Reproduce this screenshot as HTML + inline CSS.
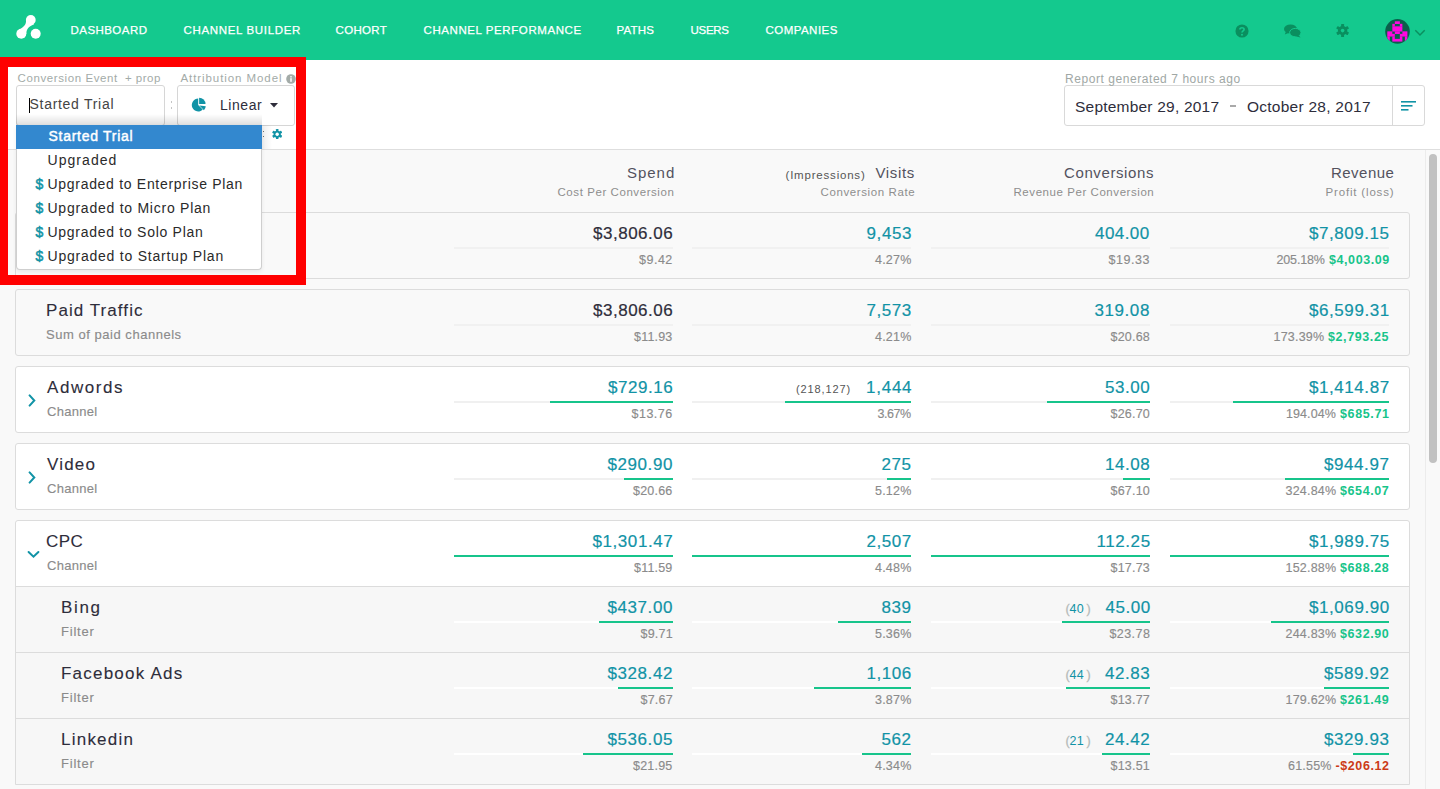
<!DOCTYPE html><html><head><meta charset="utf-8"><style>
*{margin:0;padding:0;box-sizing:border-box}
html,body{width:1440px;height:789px;overflow:hidden;background:#fff;font-family:"Liberation Sans", sans-serif}
.a{position:absolute}
.t{position:absolute;white-space:nowrap;line-height:30px}
.track{position:absolute;height:2px}
.bar{position:absolute;height:2px;background:#17c48b}
.row{position:absolute;left:15px;width:1395px;border:1px solid #dcdcdc;border-radius:3px}
</style></head><body><div class="a" style="left:0;top:0;width:1440px;height:60px;background:#14c98e"></div><svg class="a" style="left:14px;top:12px" width="32" height="32" viewBox="14 12 32 32"><path d="M26.1 20.5 C26.1 25 23.5 27 19.2 29.6 L26.4 34 C26.4 30 27.8 26.8 34.2 24.3 Z" fill="#fff"/><circle cx="30.8" cy="19.9" r="4.9" fill="#fff"/><circle cx="21.3" cy="33.7" r="5" fill="#fff"/><circle cx="35.7" cy="33.7" r="5" fill="#fff"/></svg><svg class="a" style="left:1234.5px;top:23.5px" width="14" height="14" viewBox="0 0 16 16"><circle cx="8" cy="8" r="7.5" fill="#0a8f5f"/><path d="M5.6 6.2 C5.6 3.6 10.4 3.6 10.4 6.2 C10.4 7.8 8 8 8 9.8" stroke="#14c98e" stroke-width="1.9" fill="none"/><circle cx="8" cy="12.2" r="1.1" fill="#14c98e"/></svg><svg class="a" style="left:1284px;top:24px" width="17" height="14" viewBox="0 0 17 14"><ellipse cx="6.5" cy="5" rx="6.5" ry="4.6" fill="#0a8f5f"/><path d="M2 7.5 L0.8 10.5 L5 8.8Z" fill="#0a8f5f"/><ellipse cx="11.3" cy="8.6" rx="5.7" ry="4.2" fill="#0a8f5f" stroke="#14c98e" stroke-width="1"/><path d="M14.5 11 L16.5 13.6 L11.5 12.3Z" fill="#0a8f5f"/></svg><svg class="a" style="left:1335.90px;top:23.90px" width="13.20" height="13.20" viewBox="-8 -8 16 16"><g fill="#0a8f5f"><circle cx="0" cy="0" r="5.6"/><rect x="-1.8" y="-8" width="3.6" height="5" rx="0.7" transform="rotate(0)"/><rect x="-1.8" y="-8" width="3.6" height="5" rx="0.7" transform="rotate(60)"/><rect x="-1.8" y="-8" width="3.6" height="5" rx="0.7" transform="rotate(120)"/><rect x="-1.8" y="-8" width="3.6" height="5" rx="0.7" transform="rotate(180)"/><rect x="-1.8" y="-8" width="3.6" height="5" rx="0.7" transform="rotate(240)"/><rect x="-1.8" y="-8" width="3.6" height="5" rx="0.7" transform="rotate(300)"/></g><circle cx="0" cy="0" r="2.2" fill="#14c98e"/></svg><svg class="a" style="left:1385px;top:19px" width="25" height="25" viewBox="0 0 25 25"><defs><clipPath id="cc"><circle cx="12.5" cy="12.4" r="12.3"/></clipPath></defs><circle cx="12.5" cy="12.4" r="12.3" fill="#0b5e4c"/><g clip-path="url(#cc)"><g transform="translate(2.3 2.3) scale(2.51)" fill="#ff08e0"><rect x="3" y="0" width="2" height="1.08"/><rect x="2" y="1" width="1" height="1.08"/><rect x="5" y="1" width="1" height="1.08"/><rect x="2" y="2" width="4" height="1.08"/><rect x="2" y="3" width="4" height="1.08"/><rect x="0" y="4" width="2" height="1.08"/><rect x="3" y="4" width="2" height="1.08"/><rect x="6" y="4" width="2" height="1.08"/><rect x="0" y="5" width="3" height="1.08"/><rect x="5" y="5" width="3" height="1.08"/><rect x="0" y="6" width="1" height="1.08"/><rect x="2" y="6" width="1" height="1.08"/><rect x="5" y="6" width="1" height="1.08"/><rect x="7" y="6" width="1" height="1.08"/><rect x="0" y="7" width="1" height="1.08"/><rect x="2" y="7" width="4" height="1.08"/><rect x="7" y="7" width="1" height="1.08"/></g></g></svg><svg class="a" style="left:1414px;top:29px" width="12" height="8" viewBox="0 0 12 8"><path d="M1.3 1.3 L6 6 L10.7 1.3" stroke="#0a8f5f" stroke-width="1.5" fill="none"/></svg><div class="a" style="left:1064px;top:85px;width:361px;height:41px;border:1px solid #d9d9d9;border-radius:3px"></div><div class="a" style="left:1392px;top:86px;width:1px;height:39px;background:#d9d9d9"></div><div class="a" style="left:1230px;top:105px;width:6px;height:2px;background:#a9a9a9"></div><svg class="a" style="left:1401px;top:101px" width="15" height="10" viewBox="0 0 15 10"><g fill="#1193a6"><rect x="0" y="0" width="15" height="1.6"/><rect x="0" y="4" width="11.5" height="1.6"/><rect x="0" y="8" width="7.5" height="1.6"/></g></svg><div class="a" style="left:0;top:149px;width:1440px;height:640px;background:#f9f9f9;border-top:1px solid #dedede"></div><div class="a" style="left:1425px;top:150px;width:1px;height:639px;background:#ececec"></div><div class="a" style="left:1429px;top:154px;width:8px;height:309px;background:#c1c1c1;border-radius:4px"></div><div class="row" style="top:212px;height:67px;background:#f9f9f9"></div><div class="row" style="top:289px;height:67px;background:#f9f9f9"></div><div class="row" style="top:366px;height:67px;background:#fff"></div><div class="row" style="top:443px;height:67px;background:#fff"></div><div class="track" style="left:454.00px;top:247px;width:219px;background:#f1f1f1"></div><div class="track" style="left:692.00px;top:247px;width:219px;background:#f1f1f1"></div><div class="track" style="left:931.00px;top:247px;width:219px;background:#f1f1f1"></div><div class="track" style="left:1170.00px;top:247px;width:219px;background:#f1f1f1"></div><div class="track" style="left:454.00px;top:324px;width:219px;background:#f1f1f1"></div><div class="track" style="left:692.00px;top:324px;width:219px;background:#f1f1f1"></div><div class="track" style="left:931.00px;top:324px;width:219px;background:#f1f1f1"></div><div class="track" style="left:1170.00px;top:324px;width:219px;background:#f1f1f1"></div><div class="track" style="left:454.00px;top:401px;width:219px;background:#f0f0f0"></div><div class="bar" style="left:550.30px;top:401px;width:122.70px"></div><div class="track" style="left:692.00px;top:401px;width:219px;background:#f0f0f0"></div><div class="bar" style="left:784.86px;top:401px;width:126.14px"></div><div class="track" style="left:931.00px;top:401px;width:219px;background:#f0f0f0"></div><div class="bar" style="left:1046.60px;top:401px;width:103.40px"></div><div class="track" style="left:1170.00px;top:401px;width:219px;background:#f0f0f0"></div><div class="bar" style="left:1233.27px;top:401px;width:155.73px"></div><svg class="a" style="left:27px;top:394px" width="10" height="13" viewBox="0 0 10 13"><path d="M2.6 1.4 L7.3 6.5 L2.6 11.6" stroke="#1193a6" stroke-width="2" fill="none" stroke-linecap="round"/></svg><div class="track" style="left:454.00px;top:478px;width:219px;background:#f0f0f0"></div><div class="bar" style="left:624.05px;top:478px;width:48.95px"></div><div class="track" style="left:692.00px;top:478px;width:219px;background:#f0f0f0"></div><div class="bar" style="left:886.98px;top:478px;width:24.02px"></div><div class="track" style="left:931.00px;top:478px;width:219px;background:#f0f0f0"></div><div class="bar" style="left:1122.53px;top:478px;width:27.47px"></div><div class="track" style="left:1170.00px;top:478px;width:219px;background:#f0f0f0"></div><div class="bar" style="left:1284.99px;top:478px;width:104.01px"></div><svg class="a" style="left:27px;top:471px" width="10" height="13" viewBox="0 0 10 13"><path d="M2.6 1.4 L7.3 6.5 L2.6 11.6" stroke="#1193a6" stroke-width="2" fill="none" stroke-linecap="round"/></svg><div class="row" style="top:520px;height:265px;background:#f7f7f7;border-radius:3px 3px 0 0"></div><div class="a" style="left:16px;top:521px;width:1393px;height:65px;background:#fff;border-radius:3px 3px 0 0"></div><div class="a" style="left:16px;top:586px;width:1393px;height:1px;background:#dcdcdc"></div><div class="a" style="left:16px;top:652px;width:1393px;height:1px;background:#dcdcdc"></div><div class="a" style="left:16px;top:718px;width:1393px;height:1px;background:#dcdcdc"></div><svg class="a" style="left:27px;top:550px" width="13" height="10" viewBox="0 0 13 10"><path d="M1.6 2 L6.5 6.7 L11.4 2" stroke="#1193a6" stroke-width="2" fill="none" stroke-linecap="round"/></svg><div class="track" style="left:454.00px;top:555px;width:219px;background:#f0f0f0"></div><div class="bar" style="left:454.00px;top:555px;width:219.00px"></div><div class="track" style="left:692.00px;top:555px;width:219px;background:#f0f0f0"></div><div class="bar" style="left:692.00px;top:555px;width:219.00px"></div><div class="track" style="left:931.00px;top:555px;width:219px;background:#f0f0f0"></div><div class="bar" style="left:931.00px;top:555px;width:219.00px"></div><div class="track" style="left:1170.00px;top:555px;width:219px;background:#f0f0f0"></div><div class="bar" style="left:1170.00px;top:555px;width:219.00px"></div><div class="track" style="left:454.00px;top:621px;width:219px;background:#fff"></div><div class="bar" style="left:599.47px;top:621px;width:73.53px"></div><div class="track" style="left:692.00px;top:621px;width:219px;background:#fff"></div><div class="bar" style="left:837.71px;top:621px;width:73.29px"></div><div class="track" style="left:931.00px;top:621px;width:219px;background:#fff"></div><div class="bar" style="left:1062.20px;top:621px;width:87.80px"></div><div class="track" style="left:1170.00px;top:621px;width:219px;background:#fff"></div><div class="bar" style="left:1271.24px;top:621px;width:117.76px"></div><div class="track" style="left:454.00px;top:687px;width:219px;background:#fff"></div><div class="bar" style="left:617.74px;top:687px;width:55.26px"></div><div class="track" style="left:692.00px;top:687px;width:219px;background:#fff"></div><div class="bar" style="left:814.38px;top:687px;width:96.62px"></div><div class="track" style="left:931.00px;top:687px;width:219px;background:#fff"></div><div class="bar" style="left:1066.44px;top:687px;width:83.56px"></div><div class="track" style="left:1170.00px;top:687px;width:219px;background:#fff"></div><div class="bar" style="left:1324.07px;top:687px;width:64.93px"></div><div class="track" style="left:454.00px;top:753px;width:219px;background:#fff"></div><div class="bar" style="left:582.80px;top:753px;width:90.20px"></div><div class="track" style="left:692.00px;top:753px;width:219px;background:#fff"></div><div class="bar" style="left:861.91px;top:753px;width:49.09px"></div><div class="track" style="left:931.00px;top:753px;width:219px;background:#fff"></div><div class="bar" style="left:1102.36px;top:753px;width:47.64px"></div><div class="track" style="left:1170.00px;top:753px;width:219px;background:#fff"></div><div class="bar" style="left:1352.69px;top:753px;width:36.31px"></div><div class="t" style="left:70.5px;top:15px;font-size:11.5px;color:#fff;-webkit-text-stroke-width:0.25px;letter-spacing:0.45px">DASHBOARD</div><div class="t" style="left:183.5px;top:15px;font-size:11.5px;color:#fff;-webkit-text-stroke-width:0.25px;letter-spacing:0.66px">CHANNEL BUILDER</div><div class="t" style="left:335.5px;top:15px;font-size:11.5px;color:#fff;-webkit-text-stroke-width:0.25px;letter-spacing:0.34px">COHORT</div><div class="t" style="left:423.5px;top:15px;font-size:11.5px;color:#fff;-webkit-text-stroke-width:0.25px;letter-spacing:0.58px">CHANNEL PERFORMANCE</div><div class="t" style="left:616.5px;top:15px;font-size:11.5px;color:#fff;-webkit-text-stroke-width:0.25px;letter-spacing:0.18px">PATHS</div><div class="t" style="left:690.5px;top:15px;font-size:11.5px;color:#fff;-webkit-text-stroke-width:0.25px;letter-spacing:-0.28px">USERS</div><div class="t" style="left:765.5px;top:15px;font-size:11.5px;color:#fff;-webkit-text-stroke-width:0.25px;letter-spacing:0.46px">COMPANIES</div><div class="t" style="left:1065px;top:64px;font-size:12px;color:#a0a8a5;letter-spacing:0.56px">Report generated 7 hours ago</div><div class="t" style="left:1075px;top:92px;font-size:15.5px;color:#2e2d3b;letter-spacing:0.21px">September 29, 2017</div><div class="t" style="left:1247px;top:92px;font-size:15.5px;color:#2e2d3b;letter-spacing:0.25px">October 28, 2017</div><div class="t" style="left:627px;top:158px;font-size:15px;color:#53525e;letter-spacing:0.97px">Spend</div><div class="t" style="left:557.5px;top:177px;font-size:11.5px;color:#8e8e8e;letter-spacing:0.57px">Cost Per Conversion</div><div class="t" style="left:875.5px;top:158px;font-size:15px;color:#53525e;letter-spacing:0.64px">Visits</div><div class="t" style="left:820.5px;top:177px;font-size:11.5px;color:#8e8e8e;letter-spacing:0.61px">Conversion Rate</div><div class="t" style="left:1064px;top:158px;font-size:15px;color:#53525e;letter-spacing:0.61px">Conversions</div><div class="t" style="left:1013.5px;top:177px;font-size:11.5px;color:#8e8e8e;letter-spacing:0.56px">Revenue Per Conversion</div><div class="t" style="left:1331px;top:158px;font-size:15px;color:#53525e;letter-spacing:0.47px">Revenue</div><div class="t" style="left:1325.5px;top:177px;font-size:11.5px;color:#8e8e8e;letter-spacing:0.83px">Profit (loss)</div><div class="t" style="left:785.5px;top:160px;font-size:11.5px;color:#555;letter-spacing:0.80px">(Impressions)</div><div class="t" style="left:593px;top:219px;font-size:17px;-webkit-text-stroke-width:0.2px;color:#2e2d3b;letter-spacing:0.51px">$3,806.06</div><div class="t" style="left:639px;top:245px;font-size:12.5px;-webkit-text-stroke-width:0.15px;color:#8b8b8b;letter-spacing:0.50px">$9.42</div><div class="t" style="left:866.5px;top:219px;font-size:17px;-webkit-text-stroke-width:0.2px;color:#1193a6;letter-spacing:0.62px">9,453</div><div class="t" style="left:875px;top:245px;font-size:12.5px;-webkit-text-stroke-width:0.15px;color:#8b8b8b;letter-spacing:0.20px">4.27%</div><div class="t" style="left:1095px;top:219px;font-size:17px;-webkit-text-stroke-width:0.2px;color:#1193a6;letter-spacing:0.44px">404.00</div><div class="t" style="left:1108.5px;top:245px;font-size:12.5px;-webkit-text-stroke-width:0.15px;color:#8b8b8b;letter-spacing:0.54px">$19.33</div><div class="t" style="left:1309px;top:219px;font-size:17px;-webkit-text-stroke-width:0.2px;color:#1193a6;letter-spacing:0.53px">$7,809.15</div><div class="t" style="left:1329px;top:245px;font-size:12.5px;color:#17c48a;font-weight:bold;letter-spacing:0.58px">$4,003.09</div><div class="t" style="left:1276.5px;top:245px;font-size:12.5px;-webkit-text-stroke-width:0.15px;color:#8b8b8b;letter-spacing:-0.15px">205.18%</div><div class="t" style="left:46px;top:296px;font-size:17px;-webkit-text-stroke-width:0.1px;color:#2e2d3b;letter-spacing:1.07px">Paid Traffic</div><div class="t" style="left:46px;top:320px;font-size:13px;-webkit-text-stroke-width:0.15px;color:#8b8b8b;letter-spacing:0.53px">Sum of paid channels</div><div class="t" style="left:593px;top:296px;font-size:17px;-webkit-text-stroke-width:0.2px;color:#2e2d3b;letter-spacing:0.51px">$3,806.06</div><div class="t" style="left:634px;top:322px;font-size:12.5px;-webkit-text-stroke-width:0.15px;color:#8b8b8b;letter-spacing:0.20px">$11.93</div><div class="t" style="left:866.5px;top:296px;font-size:17px;-webkit-text-stroke-width:0.2px;color:#1193a6;letter-spacing:0.57px">7,573</div><div class="t" style="left:875px;top:322px;font-size:12.5px;-webkit-text-stroke-width:0.15px;color:#8b8b8b;letter-spacing:0.20px">4.21%</div><div class="t" style="left:1094.5px;top:296px;font-size:17px;-webkit-text-stroke-width:0.2px;color:#1193a6;letter-spacing:0.57px">319.08</div><div class="t" style="left:1110.5px;top:322px;font-size:12.5px;-webkit-text-stroke-width:0.15px;color:#8b8b8b;letter-spacing:0.20px">$20.68</div><div class="t" style="left:1309px;top:296px;font-size:17px;-webkit-text-stroke-width:0.2px;color:#1193a6;letter-spacing:0.57px">$6,599.31</div><div class="t" style="left:1328px;top:322px;font-size:12.5px;color:#17c48a;font-weight:bold;letter-spacing:0.60px">$2,793.25</div><div class="t" style="left:1273.5px;top:322px;font-size:12.5px;-webkit-text-stroke-width:0.15px;color:#8b8b8b;letter-spacing:0.20px">173.39%</div><div class="t" style="left:47px;top:373px;font-size:17px;-webkit-text-stroke-width:0.1px;color:#2e2d3b;letter-spacing:1.55px">Adwords</div><div class="t" style="left:47px;top:397px;font-size:13px;-webkit-text-stroke-width:0.15px;color:#8b8b8b;letter-spacing:0.28px">Channel</div><div class="t" style="left:608px;top:373px;font-size:17px;-webkit-text-stroke-width:0.2px;color:#1193a6;letter-spacing:0.53px">$729.16</div><div class="t" style="left:631.5px;top:399px;font-size:12.5px;-webkit-text-stroke-width:0.15px;color:#8b8b8b;letter-spacing:0.50px">$13.76</div><div class="t" style="left:866px;top:373px;font-size:17px;-webkit-text-stroke-width:0.2px;color:#1193a6;letter-spacing:0.75px">1,444</div><div class="t" style="left:877.5px;top:399px;font-size:12.5px;-webkit-text-stroke-width:0.15px;color:#8b8b8b;letter-spacing:-0.47px">3.67%</div><div class="t" style="left:1105px;top:373px;font-size:17px;-webkit-text-stroke-width:0.2px;color:#1193a6;letter-spacing:0.57px">53.00</div><div class="t" style="left:1110.5px;top:399px;font-size:12.5px;-webkit-text-stroke-width:0.15px;color:#8b8b8b;letter-spacing:0.20px">$26.70</div><div class="t" style="left:1309px;top:373px;font-size:17px;-webkit-text-stroke-width:0.2px;color:#1193a6;letter-spacing:0.56px">$1,414.87</div><div class="t" style="left:1340px;top:399px;font-size:12.5px;color:#17c48a;font-weight:bold;letter-spacing:0.62px">$685.71</div><div class="t" style="left:1286px;top:399px;font-size:12.5px;-webkit-text-stroke-width:0.15px;color:#8b8b8b;letter-spacing:0.08px">194.04%</div><div class="t" style="left:796px;top:374px;font-size:11px;color:#555;letter-spacing:0.88px">(218,127)</div><div class="t" style="left:47px;top:450px;font-size:17px;-webkit-text-stroke-width:0.1px;color:#2e2d3b;letter-spacing:1.20px">Video</div><div class="t" style="left:47px;top:474px;font-size:13px;-webkit-text-stroke-width:0.15px;color:#8b8b8b;letter-spacing:0.28px">Channel</div><div class="t" style="left:607.5px;top:450px;font-size:17px;-webkit-text-stroke-width:0.2px;color:#1193a6;letter-spacing:0.57px">$290.90</div><div class="t" style="left:633px;top:476px;font-size:12.5px;-webkit-text-stroke-width:0.15px;color:#8b8b8b;letter-spacing:0.20px">$20.66</div><div class="t" style="left:881.5px;top:450px;font-size:17px;-webkit-text-stroke-width:0.2px;color:#1193a6;letter-spacing:0.57px">275</div><div class="t" style="left:875px;top:476px;font-size:12.5px;-webkit-text-stroke-width:0.15px;color:#8b8b8b;letter-spacing:0.20px">5.12%</div><div class="t" style="left:1105px;top:450px;font-size:17px;-webkit-text-stroke-width:0.2px;color:#1193a6;letter-spacing:0.57px">14.08</div><div class="t" style="left:1110.5px;top:476px;font-size:12.5px;-webkit-text-stroke-width:0.15px;color:#8b8b8b;letter-spacing:0.20px">$67.10</div><div class="t" style="left:1324px;top:450px;font-size:17px;-webkit-text-stroke-width:0.2px;color:#1193a6;letter-spacing:0.57px">$944.97</div><div class="t" style="left:1340px;top:476px;font-size:12.5px;color:#17c48a;font-weight:bold;letter-spacing:0.60px">$654.07</div><div class="t" style="left:1285.5px;top:476px;font-size:12.5px;-webkit-text-stroke-width:0.15px;color:#8b8b8b;letter-spacing:0.20px">324.84%</div><div class="t" style="left:46px;top:527px;font-size:17px;-webkit-text-stroke-width:0.1px;color:#2e2d3b;letter-spacing:0.50px">CPC</div><div class="t" style="left:47px;top:551px;font-size:13px;-webkit-text-stroke-width:0.15px;color:#8b8b8b;letter-spacing:0.28px">Channel</div><div class="t" style="left:592.5px;top:527px;font-size:17px;-webkit-text-stroke-width:0.2px;color:#1193a6;letter-spacing:0.57px">$1,301.47</div><div class="t" style="left:634px;top:553px;font-size:12.5px;-webkit-text-stroke-width:0.15px;color:#8b8b8b;letter-spacing:0.20px">$11.59</div><div class="t" style="left:866.5px;top:527px;font-size:17px;-webkit-text-stroke-width:0.2px;color:#1193a6;letter-spacing:0.57px">2,507</div><div class="t" style="left:875px;top:553px;font-size:12.5px;-webkit-text-stroke-width:0.15px;color:#8b8b8b;letter-spacing:0.20px">4.48%</div><div class="t" style="left:1096.5px;top:527px;font-size:17px;-webkit-text-stroke-width:0.2px;color:#1193a6;letter-spacing:0.57px">112.25</div><div class="t" style="left:1110.5px;top:553px;font-size:12.5px;-webkit-text-stroke-width:0.15px;color:#8b8b8b;letter-spacing:0.20px">$17.73</div><div class="t" style="left:1309px;top:527px;font-size:17px;-webkit-text-stroke-width:0.2px;color:#1193a6;letter-spacing:0.57px">$1,989.75</div><div class="t" style="left:1340px;top:553px;font-size:12.5px;color:#17c48a;font-weight:bold;letter-spacing:0.60px">$688.28</div><div class="t" style="left:1285.5px;top:553px;font-size:12.5px;-webkit-text-stroke-width:0.15px;color:#8b8b8b;letter-spacing:0.20px">152.88%</div><div class="t" style="left:61px;top:593px;font-size:17px;-webkit-text-stroke-width:0.1px;color:#2e2d3b;letter-spacing:1.63px">Bing</div><div class="t" style="left:61px;top:617px;font-size:13px;-webkit-text-stroke-width:0.15px;color:#8b8b8b;letter-spacing:0.78px">Filter</div><div class="t" style="left:607.5px;top:593px;font-size:17px;-webkit-text-stroke-width:0.2px;color:#1193a6;letter-spacing:0.57px">$437.00</div><div class="t" style="left:640.5px;top:619px;font-size:12.5px;-webkit-text-stroke-width:0.15px;color:#8b8b8b;letter-spacing:0.20px">$9.71</div><div class="t" style="left:881.5px;top:593px;font-size:17px;-webkit-text-stroke-width:0.2px;color:#1193a6;letter-spacing:0.57px">839</div><div class="t" style="left:875px;top:619px;font-size:12.5px;-webkit-text-stroke-width:0.15px;color:#8b8b8b;letter-spacing:0.20px">5.36%</div><div class="t" style="left:1105.5px;top:593px;font-size:17px;-webkit-text-stroke-width:0.2px;color:#1193a6;letter-spacing:0.53px">45.00</div><div class="t" style="left:1109.5px;top:619px;font-size:12.5px;-webkit-text-stroke-width:0.15px;color:#8b8b8b;letter-spacing:0.42px">$23.78</div><div class="t" style="left:1309px;top:593px;font-size:17px;-webkit-text-stroke-width:0.2px;color:#1193a6;letter-spacing:0.57px">$1,069.90</div><div class="t" style="left:1340px;top:619px;font-size:12.5px;color:#17c48a;font-weight:bold;letter-spacing:0.60px">$632.90</div><div class="t" style="left:1285.5px;top:619px;font-size:12.5px;-webkit-text-stroke-width:0.15px;color:#8b8b8b;letter-spacing:0.20px">244.83%</div><div class="t" style="left:1065.5px;top:594px;font-size:12.5px;color:#b4bab7;-webkit-text-stroke-width:0.3px;letter-spacing:0.00px">(</div><div class="t" style="left:1069.5px;top:594px;font-size:12.5px;color:#1193a6;letter-spacing:0.20px">40</div><div class="t" style="left:1086.5px;top:594px;font-size:12.5px;color:#b4bab7;-webkit-text-stroke-width:0.3px;letter-spacing:0.00px">)</div><div class="t" style="left:61px;top:659px;font-size:17px;-webkit-text-stroke-width:0.1px;color:#2e2d3b;letter-spacing:1.22px">Facebook Ads</div><div class="t" style="left:61px;top:683px;font-size:13px;-webkit-text-stroke-width:0.15px;color:#8b8b8b;letter-spacing:0.78px">Filter</div><div class="t" style="left:607.5px;top:659px;font-size:17px;-webkit-text-stroke-width:0.2px;color:#1193a6;letter-spacing:0.57px">$328.42</div><div class="t" style="left:640.5px;top:685px;font-size:12.5px;-webkit-text-stroke-width:0.15px;color:#8b8b8b;letter-spacing:0.20px">$7.67</div><div class="t" style="left:866.5px;top:659px;font-size:17px;-webkit-text-stroke-width:0.2px;color:#1193a6;letter-spacing:0.57px">1,106</div><div class="t" style="left:875px;top:685px;font-size:12.5px;-webkit-text-stroke-width:0.15px;color:#8b8b8b;letter-spacing:0.20px">3.87%</div><div class="t" style="left:1105px;top:659px;font-size:17px;-webkit-text-stroke-width:0.2px;color:#1193a6;letter-spacing:0.57px">42.83</div><div class="t" style="left:1110.5px;top:685px;font-size:12.5px;-webkit-text-stroke-width:0.15px;color:#8b8b8b;letter-spacing:0.20px">$13.77</div><div class="t" style="left:1324px;top:659px;font-size:17px;-webkit-text-stroke-width:0.2px;color:#1193a6;letter-spacing:0.57px">$589.92</div><div class="t" style="left:1340px;top:685px;font-size:12.5px;color:#17c48a;font-weight:bold;letter-spacing:0.60px">$261.49</div><div class="t" style="left:1285.5px;top:685px;font-size:12.5px;-webkit-text-stroke-width:0.15px;color:#8b8b8b;letter-spacing:0.20px">179.62%</div><div class="t" style="left:1065.5px;top:660px;font-size:12.5px;color:#b4bab7;-webkit-text-stroke-width:0.3px;letter-spacing:0.00px">(</div><div class="t" style="left:1069.5px;top:660px;font-size:12.5px;color:#1193a6;letter-spacing:0.20px">44</div><div class="t" style="left:1086.5px;top:660px;font-size:12.5px;color:#b4bab7;-webkit-text-stroke-width:0.3px;letter-spacing:0.00px">)</div><div class="t" style="left:61px;top:725px;font-size:17px;-webkit-text-stroke-width:0.1px;color:#2e2d3b;letter-spacing:1.23px">Linkedin</div><div class="t" style="left:61px;top:749px;font-size:13px;-webkit-text-stroke-width:0.15px;color:#8b8b8b;letter-spacing:0.78px">Filter</div><div class="t" style="left:607.5px;top:725px;font-size:17px;-webkit-text-stroke-width:0.2px;color:#1193a6;letter-spacing:0.57px">$536.05</div><div class="t" style="left:633px;top:751px;font-size:12.5px;-webkit-text-stroke-width:0.15px;color:#8b8b8b;letter-spacing:0.20px">$21.95</div><div class="t" style="left:881.5px;top:725px;font-size:17px;-webkit-text-stroke-width:0.2px;color:#1193a6;letter-spacing:0.57px">562</div><div class="t" style="left:875px;top:751px;font-size:12.5px;-webkit-text-stroke-width:0.15px;color:#8b8b8b;letter-spacing:0.20px">4.34%</div><div class="t" style="left:1105px;top:725px;font-size:17px;-webkit-text-stroke-width:0.2px;color:#1193a6;letter-spacing:0.57px">24.42</div><div class="t" style="left:1110.5px;top:751px;font-size:12.5px;-webkit-text-stroke-width:0.15px;color:#8b8b8b;letter-spacing:0.20px">$13.51</div><div class="t" style="left:1324px;top:725px;font-size:17px;-webkit-text-stroke-width:0.2px;color:#1193a6;letter-spacing:0.57px">$329.93</div><div class="t" style="left:1335.5px;top:751px;font-size:12.5px;color:#cc3b17;font-weight:bold;letter-spacing:0.60px">-$206.12</div><div class="t" style="left:1288px;top:751px;font-size:12.5px;-webkit-text-stroke-width:0.15px;color:#8b8b8b;letter-spacing:0.20px">61.55%</div><div class="t" style="left:1065.5px;top:726px;font-size:12.5px;color:#b4bab7;-webkit-text-stroke-width:0.3px;letter-spacing:0.00px">(</div><div class="t" style="left:1069.5px;top:726px;font-size:12.5px;color:#1193a6;letter-spacing:0.20px">21</div><div class="t" style="left:1086.5px;top:726px;font-size:12.5px;color:#b4bab7;-webkit-text-stroke-width:0.3px;letter-spacing:0.00px">)</div><div class="a" style="left:8px;top:67px;width:288px;height:82px;background:#fff"></div><div class="a" style="left:16px;top:85px;width:149px;height:41px;border:1px solid #d6d6d6;border-radius:3px;background:#fff"></div><div class="a" style="left:177px;top:85px;width:118px;height:41px;border:1px solid #d6d6d6;border-radius:3px;background:#fff"></div><div class="a" style="left:170.5px;top:101px;width:1.5px;height:1.5px;background:#c4c4c4"></div><div class="a" style="left:170.5px;top:107px;width:1.5px;height:1.5px;background:#c4c4c4"></div><div class="a" style="left:29px;top:98px;width:1px;height:15px;background:#000"></div><svg class="a" style="left:285.5px;top:73.5px" width="10" height="10" viewBox="0 0 10 10"><circle cx="5" cy="5" r="4.8" fill="#a3aba8"/><rect x="4.25" y="4.2" width="1.5" height="3.6" fill="#fff"/><rect x="4.25" y="2.1" width="1.5" height="1.4" fill="#fff"/></svg><svg class="a" style="left:190px;top:97px" width="18" height="18" viewBox="0 0 18 18"><g fill="#1193a6"><path d="M8.2 8 L8.2 1.6 A6.4 6.4 0 1 0 12.73 12.53 Z"/><path d="M9.1 7.1 L9.1 0.7 A6.4 6.4 0 0 1 15.5 7.1 Z"/><path d="M9.4 8.6 L15.78 9.16 A6.4 6.4 0 0 1 13.93 13.13 Z"/></g></svg><svg class="a" style="left:270px;top:103px" width="8" height="5" viewBox="0 0 8 5"><path d="M0 0 L8 0 L4 4.5Z" fill="#2e2d3b"/></svg><div class="a" style="left:263px;top:131px;width:1.3px;height:1.3px;background:#777"></div><div class="a" style="left:263px;top:136px;width:1.3px;height:1.3px;background:#777"></div><svg class="a" style="left:271.70px;top:128.60px" width="10.40" height="10.40" viewBox="-8 -8 16 16"><g fill="#1193a6"><circle cx="0" cy="0" r="5.4"/><rect x="-1.9" y="-8" width="3.8" height="5" rx="0.7" transform="rotate(0)"/><rect x="-1.9" y="-8" width="3.8" height="5" rx="0.7" transform="rotate(60)"/><rect x="-1.9" y="-8" width="3.8" height="5" rx="0.7" transform="rotate(120)"/><rect x="-1.9" y="-8" width="3.8" height="5" rx="0.7" transform="rotate(180)"/><rect x="-1.9" y="-8" width="3.8" height="5" rx="0.7" transform="rotate(240)"/><rect x="-1.9" y="-8" width="3.8" height="5" rx="0.7" transform="rotate(300)"/></g><circle cx="0" cy="0" r="2.6" fill="#fff"/></svg><div class="a" style="left:16px;top:125px;width:246px;height:145px;background:#fff;border:1px solid #cfcfcf;border-top:none;border-radius:0 0 4px 4px;box-shadow:0 2px 4px rgba(0,0,0,0.07)"></div><div class="a" style="left:16px;top:125px;width:246px;height:24px;background:#3388cf"></div><div class="a" style="left:16px;top:114px;width:246px;height:11px;background:linear-gradient(rgba(0,0,0,0),rgba(0,0,0,0.13))"></div><div class="a" style="left:262px;top:125px;width:10px;height:24px;background:linear-gradient(90deg,rgba(0,0,0,0.07),rgba(0,0,0,0))"></div><div class="t" style="left:17.5px;top:63px;font-size:11.5px;color:#a3aba8;letter-spacing:0.60px">Conversion Event</div><div class="t" style="left:125px;top:63px;font-size:11.5px;color:#a3aba8;letter-spacing:0.48px">+ prop</div><div class="t" style="left:180.5px;top:63px;font-size:11.5px;color:#a3aba8;letter-spacing:0.92px">Attribution Model</div><div class="t" style="left:29.5px;top:89px;font-size:14px;color:#444;letter-spacing:0.71px">Started Trial</div><div class="t" style="left:220px;top:90px;font-size:14px;color:#2e2d3b;letter-spacing:0.56px">Linear</div><div class="t" style="left:48.5px;top:121px;font-size:14px;color:#fff;-webkit-text-stroke-width:0.45px;letter-spacing:0.72px">Started Trial</div><div class="t" style="left:47.5px;top:145px;font-size:14px;color:#2a2a2a;letter-spacing:1.06px">Upgraded</div><div class="t" style="left:47.5px;top:169px;font-size:14px;color:#2a2a2a;letter-spacing:0.70px">Upgraded to Enterprise Plan</div><div class="t" style="left:35.5px;top:169px;font-size:14px;-webkit-text-stroke-width:0.5px;color:#1193a6;letter-spacing:0.00px">$</div><div class="t" style="left:47.5px;top:193px;font-size:14px;color:#2a2a2a;letter-spacing:0.75px">Upgraded to Micro Plan</div><div class="t" style="left:35.5px;top:193px;font-size:14px;-webkit-text-stroke-width:0.5px;color:#1193a6;letter-spacing:0.00px">$</div><div class="t" style="left:47.5px;top:217px;font-size:14px;color:#2a2a2a;letter-spacing:0.72px">Upgraded to Solo Plan</div><div class="t" style="left:35.5px;top:217px;font-size:14px;-webkit-text-stroke-width:0.5px;color:#1193a6;letter-spacing:0.00px">$</div><div class="t" style="left:47.5px;top:241px;font-size:14px;color:#2a2a2a;letter-spacing:0.77px">Upgraded to Startup Plan</div><div class="t" style="left:35.5px;top:241px;font-size:14px;-webkit-text-stroke-width:0.5px;color:#1193a6;letter-spacing:0.00px">$</div><div class="a" style="left:-2px;top:57px;width:308px;height:228px;border:10px solid #ff0000"></div></body></html>
